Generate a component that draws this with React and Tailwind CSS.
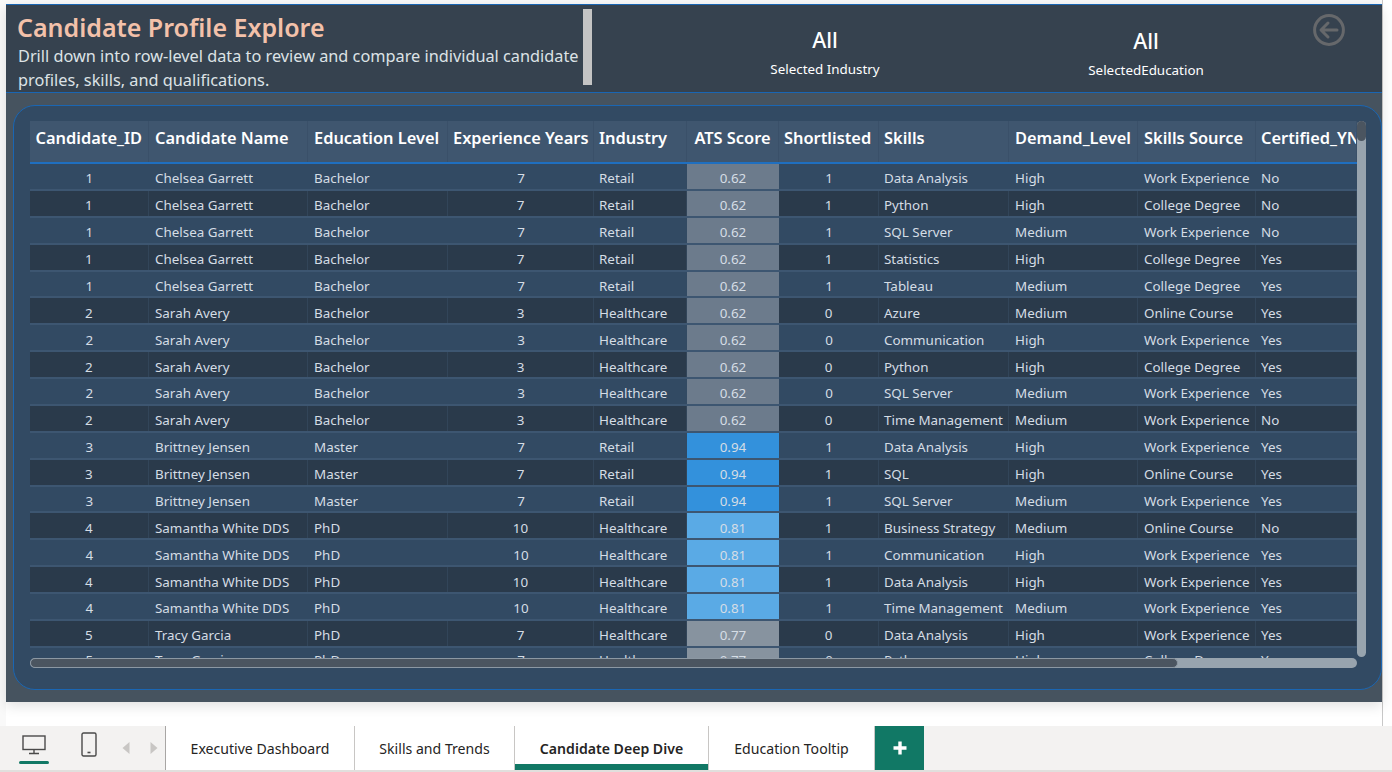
const W = [
  "w-[118.5px]", "w-[159.5px]", "w-[140px]", "w-[146px]", "w-[93px]", "w-[92px]",
  "w-[100px]", "w-[130px]", "w-[129px]", "w-[118px]", "w-[101px]",
];
const HEAD = ["Candidate_ID", "Candidate Name", "Education Level", "Experience Years", "Industry", "ATS Score", "Shortlisted", "Skills", "Demand_Level", "Skills Source", "Certified_YN"];
const HEAD_ALIGN = ["pl-[5.5px]", "pl-[6.5px]", "pl-[6px]", "pl-[5px]", "pl-[5px]", "justify-center", "pl-[5px]", "pl-[5px]", "pl-[6px]", "pl-[6px]", "pl-[5px]"];
const BODY_ALIGN = ["justify-center", "pl-[6.5px]", "pl-[6px]", "justify-center", "pl-[5px]", "justify-center", "justify-center", "pl-[5px]", "pl-[6px]", "pl-[6px]", "pl-[5px]"];
const C = ["Chelsea Garrett", "Bachelor", "7", "Retail", "0.62", "1"];
const S = ["Sarah Avery", "Bachelor", "3", "Healthcare", "0.62", "0"];
const B = ["Brittney Jensen", "Master", "7", "Retail", "0.94", "1"];
const M = ["Samantha White DDS", "PhD", "10", "Healthcare", "0.81", "1"];
const T = ["Tracy Garcia", "PhD", "7", "Healthcare", "0.77", "0"];
const ROWS = [
  ["1", ...C, "Data Analysis", "High", "Work Experience", "No"],
  ["1", ...C, "Python", "High", "College Degree", "No"],
  ["1", ...C, "SQL Server", "Medium", "Work Experience", "No"],
  ["1", ...C, "Statistics", "High", "College Degree", "Yes"],
  ["1", ...C, "Tableau", "Medium", "College Degree", "Yes"],
  ["2", ...S, "Azure", "Medium", "Online Course", "Yes"],
  ["2", ...S, "Communication", "High", "Work Experience", "Yes"],
  ["2", ...S, "Python", "High", "College Degree", "Yes"],
  ["2", ...S, "SQL Server", "Medium", "Work Experience", "Yes"],
  ["2", ...S, "Time Management", "Medium", "Work Experience", "No"],
  ["3", ...B, "Data Analysis", "High", "Work Experience", "Yes"],
  ["3", ...B, "SQL", "High", "Online Course", "Yes"],
  ["3", ...B, "SQL Server", "Medium", "Work Experience", "Yes"],
  ["4", ...M, "Business Strategy", "Medium", "Online Course", "No"],
  ["4", ...M, "Communication", "High", "Work Experience", "Yes"],
  ["4", ...M, "Data Analysis", "High", "Work Experience", "Yes"],
  ["4", ...M, "Time Management", "Medium", "Work Experience", "Yes"],
  ["5", ...T, "Data Analysis", "High", "Work Experience", "Yes"],
  ["5", ...T, "Python", "High", "College Degree", "Yes"],
];
const ATS = { "0.62": "bg-[#6c7b8c]", "0.94": "bg-[#3391dc]", "0.81": "bg-[#5aaae5]", "0.77": "bg-[#87939f]" };

function Row({ r, i }) {
  return (
    <div className={`flex h-[26.88px] w-[1327px] shrink-0 border-b-2 border-[#3d5671] ${i % 2 ? "bg-[#2a3a4b]" : "bg-[#324a63]"}`}>
      {r.map((v, c) => (
        <div
          key={c}
          className={`${W[c]} shrink-0 flex items-center ${i === 18 ? "pt-0" : "pt-[4px]"} whitespace-nowrap overflow-hidden text-[13.4px] text-[#d5dde5] ${BODY_ALIGN[c]} ${c === 5 ? ATS[v] : ""} ${i % 2 && c !== 5 ? "border-r border-[#324559]" : ""}`}
        >
          {v}
        </div>
      ))}
    </div>
  );
}

function Tab({ label, active, w }) {
  return (
    <div className={`${w} h-full bg-white border-r border-[#c8c6c4] flex flex-col items-center justify-center relative text-[14.1px] ${active ? "font-semibold text-[#252423]" : "text-[#252423]"}`}>
      <span className="mt-[1px]">{label}</span>
      {active && <div className="absolute left-0 right-0 bottom-0 h-[6px] bg-[#117865]" />}
    </div>
  );
}

export default function App() {
  return (
    <div className="w-[1392px] h-[772px] bg-white flex flex-col overflow-hidden font-['Noto_Sans',sans-serif]">
      <div className="w-[1383px] h-[726px] shrink-0 pt-[4px] pl-[6px] bg-[#f9f9f9] border-r border-[#c8c8c8]">
        <div className="w-[1376px] h-[722px] bg-white">
        <div className="w-[1376px] h-[698px] bg-[#46535f] flex flex-col shadow-[0_4px_12px_rgba(0,0,0,0.12)]">
          {/* header band */}
          <div className="h-[89px] shrink-0 bg-[#36424f] border-y border-[#1a66b3] flex overflow-hidden">
            <div className="w-[577px] shrink-0 pl-[12px] overflow-hidden">
              <div className="text-[25px] leading-[34px] mt-[5px] ml-[-1px] font-semibold text-[#f3c1aa] whitespace-nowrap">Candidate Profile Explore</div>
              <div className="text-[16.3px] leading-[24px] text-[#dde2e6] w-[575px]">Drill down into row-level data to review and compare individual candidate profiles, skills, and qualifications.</div>
            </div>
            <div className="w-[9px] h-[76px] mt-[4px] bg-[#c4c4c4] shrink-0" />
            <div className="w-[133px] shrink-0" />
            <div className="w-[200px] shrink-0 flex flex-col items-center pt-[20px]">
              <div className="text-[21.5px] leading-[30px] font-medium text-white">All</div>
              <div className="text-[13.4px] leading-[18px] mt-[5px] text-white">Selected Industry</div>
            </div>
            <div className="w-[200px] shrink-0 flex flex-col items-center pt-[21px] ml-[121px]">
              <div className="text-[21.5px] leading-[30px] font-medium text-white">All</div>
              <div className="text-[13.4px] leading-[18px] mt-[5px] text-white">SelectedEducation</div>
            </div>
            <div className="ml-[67px] mt-[9px] shrink-0">
              <svg width="32" height="32" viewBox="0 0 32 32" fill="none" stroke="#66686b" strokeWidth="3" strokeLinecap="round" strokeLinejoin="round">
                <circle cx="16" cy="16" r="14.4" />
                <path d="M24 16H8.5M15 9l-7 7 7 7" />
              </svg>
            </div>
          </div>
          {/* table panel */}
          <div className="mt-[12px] ml-[7px] w-[1369px] h-[585px] shrink-0 bg-[#324a63] border border-[#1a66b3] rounded-[22px] pt-[15px] pl-[16px] flex">
            <div className="w-[1327px] shrink-0 flex flex-col">
              <div className="h-[537px] overflow-hidden flex flex-col">
                <div className="flex h-[43px] w-[1327px] shrink-0 bg-[#3f566f] border-b-2 border-[#1f6fc0]">
                  {HEAD.map((h, c) => (
                    <div key={h} className={`${W[c]} shrink-0 flex items-center pb-[6px] whitespace-nowrap overflow-hidden text-[16.4px] font-semibold text-white border-r border-[#3a5069] ${HEAD_ALIGN[c]}`}>
                      {h}
                    </div>
                  ))}
                </div>
                {ROWS.map((r, i) => <Row key={i} r={r} i={i} />)}
              </div>
              {/* horizontal scrollbar */}
              <div className="h-[10px] w-[1327px] bg-[#98a4ae] rounded-full shrink-0">
                <div className="h-full w-[1148px] bg-[#4b5560] border border-[#8c98a3] rounded-full" />
              </div>
            </div>
            {/* vertical scrollbar */}
            <div className="w-[9px] h-[536px] bg-[#98a4ae] rounded-full shrink-0">
              <div className="w-full h-[20px] bg-[#4b5560] rounded-full" />
            </div>
          </div>
        </div>
        </div>
      </div>
      {/* tab bar */}
      <div className="h-[44px] shrink-0 bg-[#f3f2f1] flex items-center">
        <div className="w-[166px] h-full shrink-0 flex items-center border-r border-[#a8a6a4] relative">
          <div className="w-[30px] ml-[19px] h-full flex flex-col items-center pt-[9px] relative">
            <svg width="24" height="20" viewBox="0 0 24 20" fill="none" stroke="#4a4a4a" strokeWidth="1.4">
              <rect x="1" y="1" width="22" height="13.5" />
              <path d="M12 14.5V18M7 18.5h10" />
            </svg>
            <div className="absolute left-0 right-0 top-[35px] h-[3px] rounded-sm bg-[#117865]" />
          </div>
          <div className="ml-[32px] h-full flex items-start pt-[6px]">
            <svg width="16" height="25" viewBox="0 0 16 25" fill="none" stroke="#4a4a4a" strokeWidth="1.4">
              <rect x="1" y="1" width="14" height="23" rx="1.5" />
              <path d="M6.5 20.5h3" strokeWidth="1.6" />
            </svg>
          </div>
          <div className="ml-[25px] flex items-center gap-[20px]">
            <svg width="8" height="12" viewBox="0 0 8 12" fill="#c8c6c4"><path d="M7.5 0v12L0.5 6z" /></svg>
            <svg width="8" height="12" viewBox="0 0 8 12" fill="#c8c6c4"><path d="M0.5 0v12L7.5 6z" /></svg>
          </div>
        </div>
        <Tab label="Executive Dashboard" w="w-[189px]" />
        <Tab label="Skills and Trends" w="w-[160px]" />
        <Tab label="Candidate Deep Dive" active w="w-[194px]" />
        <Tab label="Education Tooltip" w="w-[166px]" />
        <div className="w-[49px] h-full bg-[#117865] flex items-center justify-center shrink-0">
          <svg width="16" height="16" viewBox="0 0 16 16"><path d="M8 1.5v13M1.5 8h13" stroke="#fff" strokeWidth="3.4" /></svg>
        </div>
      </div>
      <div className="h-[2px] bg-[#e1dfdd] shrink-0" />
    </div>
  );
}
